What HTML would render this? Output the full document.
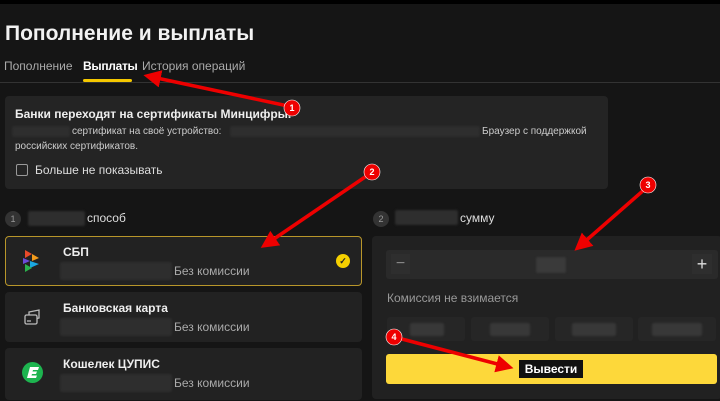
<!DOCTYPE html>
<html><head><meta charset="utf-8"><style>
*{margin:0;padding:0;box-sizing:border-box}
body{width:720px;height:401px;background:#151515;font-family:"Liberation Sans",sans-serif;color:#eee;position:relative;overflow:hidden}
.a{position:absolute}
.blur{position:absolute;background:#2e2e2e;border-radius:2px;filter:blur(1px)}
.card{position:absolute;left:5px;width:357px;height:50px;background:#222;border-radius:4px}
.t{font-size:12px;font-weight:bold;color:#eee}
.g{font-size:12px;color:#aaa}
.chip{position:absolute;top:317px;height:24px;width:78px;background:#262626;border-radius:3px}
</style></head><body>
<div class="a" style="left:0;top:0;width:720px;height:4px;background:#000"></div>
<div class="a" style="left:5px;top:22px;font-size:21px;font-weight:bold;color:#f2f2f2">Пополнение и выплаты</div>
<div class="a" style="left:4px;top:59px;font-size:12px;color:#aaa">Пополнение</div>
<div class="a" style="left:83px;top:59px;font-size:12px;color:#fff;font-weight:bold;letter-spacing:-0.3px">Выплаты</div>
<div class="a" style="left:142px;top:59px;font-size:12px;color:#aaa">История операций</div>
<div class="a" style="left:0;top:82px;width:720px;height:1px;background:#333"></div>
<div class="a" style="left:83px;top:79px;width:49px;height:3px;background:#f5c800;border-radius:2px"></div>

<div class="a" style="left:5px;top:96px;width:603px;height:93px;background:#242424;border-radius:4px"></div>
<div class="a t" style="left:15px;top:107px">Банки переходят на сертификаты Минцифры.</div>
<div class="blur" style="left:12px;top:126px;width:58px;height:11px"></div>
<div class="a" style="left:72px;top:126px;font-size:10px;color:#ccc">сертификат на своё устройство:</div>
<div class="blur" style="left:230px;top:126px;width:250px;height:11px"></div>
<div class="a" style="left:482px;top:126px;font-size:10px;color:#ccc">Браузер с поддержкой</div>
<div class="a" style="left:15px;top:141px;font-size:10px;color:#ccc">российских сертификатов.</div>
<div class="a" style="left:16px;top:164px;width:12px;height:12px;border:1.5px solid #999;border-radius:2px"></div>
<div class="a" style="left:35px;top:163px;font-size:12px;color:#ddd">Больше не показывать</div>

<div class="a" style="left:5px;top:211px;width:16px;height:16px;border-radius:50%;background:#333;color:#999;font-size:9px;text-align:center;line-height:16px">1</div>
<div class="blur" style="left:28px;top:211px;width:57px;height:15px"></div>
<div class="a" style="left:87px;top:211px;font-size:12px;color:#ddd">способ</div>

<div class="card" style="top:236px;border:1px solid #b8962a"></div>
<svg class="a" style="left:23px;top:250px" width="18" height="22" viewBox="0 0 18 22"><path d="M2 0 L9 4 L2 8Z" fill="#e94a2a"/><path d="M9 4 L16 8 L9 11Z" fill="#f39a1c"/><path d="M0 8 L7 11 L0 14Z" fill="#6c4bd9"/><path d="M7 11 L16 14 L7 18Z" fill="#1aa8e0"/><path d="M2 14 L9 18 L2 22Z" fill="#2bb24c"/></svg>
<div class="a t" style="left:63px;top:245px">СБП</div>
<div class="blur" style="left:60px;top:262px;width:112px;height:18px"></div>
<div class="a g" style="left:174px;top:264px">Без комиссии</div>
<div class="a" style="left:336px;top:254px;width:14px;height:14px;border-radius:50%;background:#f5d000;color:#222;font-size:9px;text-align:center;line-height:14px;font-weight:bold">✓</div>

<div class="card" style="top:292px"></div>
<svg class="a" style="left:23px;top:307px" width="20" height="20" viewBox="0 0 20 20" fill="none" stroke="#bbb" stroke-width="1.3"><rect x="2" y="8" width="12" height="9" rx="1.5"/><path d="M6 8 V5 L16 3 V11 L14 11.5"/><path d="M4 14 H8"/></svg>
<div class="a t" style="left:63px;top:301px">Банковская карта</div>
<div class="blur" style="left:60px;top:318px;width:112px;height:18px"></div>
<div class="a g" style="left:174px;top:320px">Без комиссии</div>

<div class="card" style="top:348px;height:52px"></div>
<div class="a" style="left:22px;top:362px;width:21px;height:21px;border-radius:50%;background:#1db44f"></div>
<svg class="a" style="left:26px;top:366px" width="14" height="13" viewBox="0 0 14 13"><path d="M4 1 H13 L12 4 H7 L6.5 5.5 H11 L10 8 H6 L5.5 9.5 H11 L10 12 H1Z" fill="#fff"/></svg>
<div class="a t" style="left:63px;top:357px">Кошелек ЦУПИС</div>
<div class="blur" style="left:60px;top:374px;width:112px;height:18px"></div>
<div class="a g" style="left:174px;top:376px">Без комиссии</div>

<div class="a" style="left:373px;top:211px;width:16px;height:16px;border-radius:50%;background:#333;color:#999;font-size:9px;text-align:center;line-height:16px">2</div>
<div class="blur" style="left:395px;top:210px;width:63px;height:15px"></div>
<div class="a" style="left:460px;top:211px;font-size:12px;color:#ddd">сумму</div>

<div class="a" style="left:372px;top:236px;width:350px;height:163px;background:#212121;border-radius:4px"></div>
<div class="a" style="left:386px;top:250px;width:332px;height:29px;background:#2a2a2a;border-radius:3px"></div>
<div class="a" style="left:391px;top:254px;width:19px;height:20px;background:#2e2e2e;color:#888;font-size:16px;text-align:center;line-height:20px">−</div>
<div class="a" style="left:692px;top:254px;width:20px;height:20px;background:#2e2e2e;color:#ddd;font-size:18px;text-align:center;line-height:20px">+</div>
<div class="blur" style="left:536px;top:257px;width:30px;height:16px;background:#3a3a3a"></div>
<div class="a" style="left:387px;top:291px;font-size:12px;color:#999">Комиссия не взимается</div>
<div class="chip" style="left:387px"></div><div class="blur" style="left:410px;top:323px;width:34px;height:13px;background:#383838"></div>
<div class="chip" style="left:471px"></div><div class="blur" style="left:490px;top:323px;width:40px;height:13px;background:#383838"></div>
<div class="chip" style="left:555px"></div><div class="blur" style="left:572px;top:323px;width:44px;height:13px;background:#383838"></div>
<div class="chip" style="left:638px"></div><div class="blur" style="left:652px;top:323px;width:50px;height:13px;background:#383838"></div>
<div class="a" style="left:386px;top:354px;width:331px;height:30px;background:#fdd83a;border-radius:3px"></div>
<div class="a" style="left:519px;top:360px;width:64px;height:18px;background:#111;color:#fff;font-size:12px;font-weight:bold;text-align:center;line-height:18px">Вывести</div>

<svg class="a" style="left:0;top:0" width="720" height="401">
<defs><marker id="m" markerWidth="5" markerHeight="5" refX="2.5" refY="2.5" orient="auto"><path d="M0 0 L5 2.5 L0 5Z" fill="#e00"/></marker></defs>
<g stroke="#e00" stroke-width="3.5" fill="none" marker-end="url(#m)">
<line x1="288" y1="106" x2="152" y2="77"/>
<line x1="368" y1="175" x2="268" y2="243"/>
<line x1="645" y1="189" x2="581" y2="245"/>
<line x1="398" y1="338" x2="505" y2="366"/>
</g>
<g fill="#e00" stroke="#fff" stroke-width="0.6"><circle cx="292" cy="108" r="8"/><circle cx="372" cy="172" r="8"/><circle cx="648" cy="185" r="8"/><circle cx="394" cy="337" r="8"/></g>
<g fill="#fff" font-size="9" font-weight="bold" font-family="Liberation Sans" text-anchor="middle"><text x="292" y="111">1</text><text x="372" y="175">2</text><text x="648" y="188">3</text><text x="394" y="340">4</text></g>
</svg>
</body></html>
